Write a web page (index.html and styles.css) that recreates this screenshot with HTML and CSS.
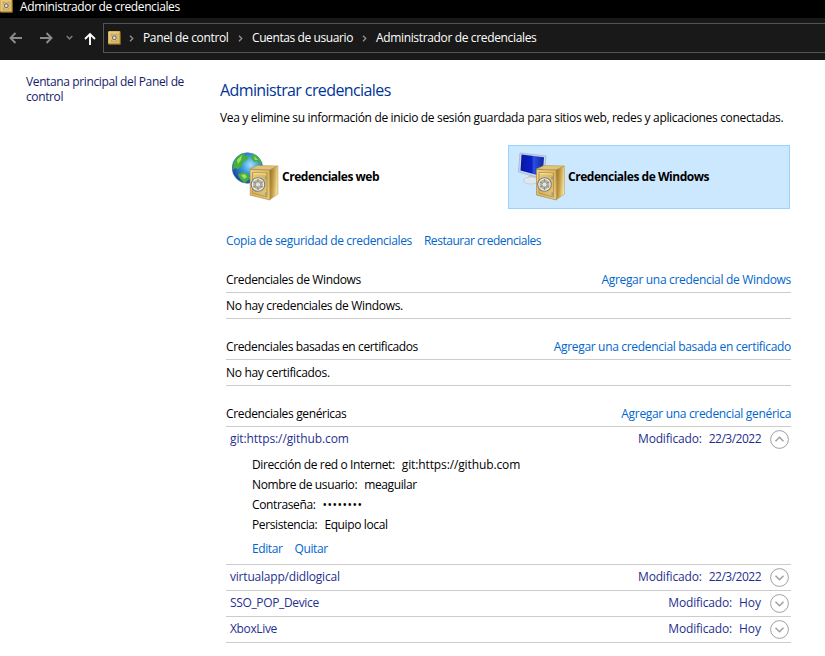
FILE: index.html
```html
<!DOCTYPE html>
<html lang="es">
<head>
<meta charset="utf-8">
<title>Administrador de credenciales</title>
<link rel="stylesheet" href="styles.css">
</head>
<body>
<svg class="defs" aria-hidden="true">
  <defs>
    <linearGradient id="gold" x1="0" y1="0" x2="1" y2="1"><stop offset="0" stop-color="#ecd58b"/><stop offset=".5" stop-color="#d8b764"/><stop offset="1" stop-color="#e5cc7e"/></linearGradient>
    <linearGradient id="goldSide" x1="0" y1="0" x2="1" y2="0.300"><stop offset="0" stop-color="#916c26"/><stop offset=".5" stop-color="#c39a42"/><stop offset="1" stop-color="#f0e09c"/></linearGradient>
    <radialGradient id="sea" cx=".6" cy=".4" r=".65"><stop offset="0" stop-color="#a0e4fa"/><stop offset=".45" stop-color="#3a94da"/><stop offset="1" stop-color="#1b3f98"/></radialGradient>
    <linearGradient id="screen" x1="0" y1="0" x2="1" y2="0"><stop offset="0" stop-color="#0717a4"/><stop offset=".48" stop-color="#0a20c8"/><stop offset=".56" stop-color="#2c50dc"/><stop offset="1" stop-color="#1023a8"/></linearGradient>
    <symbol id="safe" viewBox="0 0 30 38">
      <path d="M.5 5.500 8 2 28 2.500 20 6.500z" fill="#dfc578" stroke="#b8944a" stroke-width=".6"/>
      <path d="M20 6.500 28.500 2.500 28.500 30.500 20.500 36z" fill="url(#goldSide)" stroke="#b8944a" stroke-width=".5"/>
      <path d="M.5 6 20 6.500 20.500 36.500 .5 31.500z" fill="url(#gold)" stroke="#b08a3a" stroke-width=".7"/>
      <path d="M3 9 17.500 9.500 17.500 33.500 3 29.500z" fill="none" stroke="#a98537" stroke-width=".7"/>
      <path d="M4 10 16.500 10.500" stroke="#fff0ad" stroke-width=".7"/>
      <circle cx="8.500" cy="21" r="6.700" fill="#c2b48e" stroke="#808080" stroke-width="1.300"/>
      <circle cx="8.500" cy="21" r="5.600" fill="none" stroke="#ececec" stroke-width="1.200"/>
      <path d="M8.500 15.500v11M3.800 18.300l9.400 5.400M3.800 23.700l9.400-5.400" stroke="#8b8e94" stroke-width="1.300"/>
      <circle cx="8.500" cy="21" r="2.500" fill="#e2e3e7" stroke="#8a8a8a" stroke-width=".6"/>
      <path d="M16.300 13v3M16.300 29v3" stroke="#999" stroke-width="1.700"/>
    </symbol>
    <symbol id="vault" viewBox="0 0 13 14">
      <path d="M.5.5h11.500v12.500h-11.500z" fill="#dcb65b" stroke="#b58a34"/>
      <path d="M1 1h10.500M1 1v11" stroke="#f2da98"/>
      <path d="M2.500 2.500h7.500v8.500h-7.500z" fill="#c79c43" stroke="#e8ca7b" stroke-width=".7"/>
      <circle cx="6.300" cy="6.700" r="3" fill="#857145" stroke="#d9d2bc"/>
      <circle cx="6.300" cy="6.700" r="1.200" fill="#efeee5"/>
      <path d="M1 13.300h11.500V3" fill="none" stroke="#80601e" stroke-width=".8"/>
    </symbol>
    <symbol id="down" viewBox="0 0 19 19"><circle cx="9.500" cy="9.500" r="8.900" fill="none" stroke="#a0a0a0"/><path d="M5.500 7.700 9.500 11.700 13.500 7.700" fill="none" stroke="#a0a0a0" stroke-width="1.500"/></symbol>
    <symbol id="sep" viewBox="0 0 5 7"><path d="M1 .7 3.800 3.500 1 6.300" fill="none" stroke="#929292" stroke-width="1.300"/></symbol>
  </defs>
</svg>
<header class="titlebar"><svg class="app-icon"><use href="#vault"/></svg><span class="caption">Administrador de credenciales</span></header>
<nav class="toolbar">
  <svg class="nav-icons" viewBox="0 0 103 42" fill="none">
    <path d="M10.500 20H22M15.500 15 10.500 20l5 5" stroke="#8b8b8b" stroke-width="1.900"/>
    <path d="M40 20h11.500M46.500 15l5 5-5 5" stroke="#8b8b8b" stroke-width="1.900"/>
    <path d="M66.700 18l2.800 2.800 2.800-2.800" stroke="#777" stroke-width="1.600"/>
    <path d="M90 27V16M85 21l5-5 5 5" stroke="#fff" stroke-width="1.900"/>
  </svg>
  <div class="address">
    <svg class="vault"><use href="#vault"/></svg>
    <svg class="sep first"><use href="#sep"/></svg><span class="crumb c1">Panel de control</span>
    <svg class="sep"><use href="#sep"/></svg><span class="crumb c2">Cuentas de usuario</span>
    <svg class="sep"><use href="#sep"/></svg><span class="crumb c3">Administrador de credenciales</span>
  </div>
</nav>
<div class="page">
  <aside><a class="home">Ventana principal del Panel de<br>control</a></aside>
  <main>
    <h1>Administrar credenciales</h1>
    <p class="intro">Vea y elimine su información de inicio de sesión guardada para sitios web, redes y aplicaciones conectadas.</p>
    <div class="tiles">
      <div class="tile">
        <svg class="tile-icon" viewBox="0 0 50 50">
          <circle cx="15.500" cy="16" r="15.300" fill="url(#sea)" stroke="#3c73b0" stroke-width=".6"/>
          <path d="M1.500 11C4 5 9 1.500 13 1l-1 3 5 0-2 4-4 2-1 4-4 3-3-1-2 2zM20 2c5 1 8 5 10 9l-3 1-2-3-3 1-3-4zM6 22l5-2 5 2 2 4-5 5c-4-2-6-5-7-9z" fill="#45b13c"/>
          <path d="M5 8l5-5-1 5-3 4zM22 4l4 4-3 0zM9 23l4-1 2 3-3 2z" fill="#9fdf68"/>
          <use href="#safe" x="17.500" y="11.500" width="30" height="38"/>
        </svg>
        <b class="web">Credenciales web</b>
      </div>
      <div class="tile selected">
        <svg class="tile-icon" viewBox="0 0 50 50">
          <path d="M11 23h7l2 7H9z" fill="#bfc6d1"/><ellipse cx="13" cy="28.500" rx="7.500" ry="3.500" fill="#e2e5ea" stroke="#b8bfc9" stroke-width=".6"/>
          <path d="M2 1 28 4 26 27 .5 20z" fill="#cbd7ea" stroke="#a1b4cc" stroke-width=".8"/>
          <path d="M3.500 2.500 26 5.200 24.500 24.500 2.500 18.500z" fill="url(#screen)"/>
          <use href="#safe" x="18" y="11.500" width="30" height="38"/>
        </svg>
        <b class="win">Credenciales de Windows</b>
      </div>
    </div>
    <div class="content">
      <div class="actions"><a class="backup">Copia de seguridad de credenciales</a><a class="restore">Restaurar credenciales</a></div>
      <section>
        <div class="head"><span>Credenciales de Windows</span><a>Agregar una credencial de Windows</a></div>
        <div class="empty">No hay credenciales de Windows.</div>
      </section>
      <section>
        <div class="head"><span class="cert">Credenciales basadas en certificados</span><a>Agregar una credencial basada en certificado</a></div>
        <div class="empty">No hay certificados.</div>
      </section>
      <section>
        <div class="head"><span>Credenciales genéricas</span><a>Agregar una credencial genérica</a></div>
        <div class="entry open">
          <div class="row"><span class="name url">git:https://github.com</span><span class="label">Modificado:</span><span class="date">22/3/2022</span><svg class="toggle up"><use href="#down"/></svg></div>
          <div class="details">
            <div class="field"><span>Dirección de red o Internet:</span><span class="url">git:https://github.com</span></div>
            <div class="field"><span>Nombre de usuario:</span><span>meaguilar</span></div>
            <div class="field"><span>Contraseña:</span><span class="dots">••••••••</span></div>
            <div class="field"><span>Persistencia:</span><span>Equipo local</span></div>
            <div class="edit"><a>Editar</a><a>Quitar</a></div>
          </div>
        </div>
        <div class="entry"><div class="row"><span class="name path">virtualapp/didlogical</span><span class="label">Modificado:</span><span class="date">22/3/2022</span><svg class="toggle"><use href="#down"/></svg></div></div>
        <div class="entry"><div class="row"><span class="name">SSO_POP_Device</span><span class="label">Modificado:</span><span class="date today">Hoy</span><svg class="toggle"><use href="#down"/></svg></div></div>
        <div class="entry"><div class="row"><span class="name">XboxLive</span><span class="label">Modificado:</span><span class="date today">Hoy</span><svg class="toggle"><use href="#down"/></svg></div></div>
      </section>
    </div>
  </main>
</div>
</body>
</html>
```
FILE: styles.css
```css
* { box-sizing: border-box; }
body { margin: 0; width: 825px; height: 656px; overflow: hidden; background: #fff; color: #000; font: 12px/15px "Open Sans", "Noto Sans", sans-serif; letter-spacing: -0.35px; white-space: nowrap; }
svg { display: block; flex: none; }
.defs { position: absolute; width: 0; height: 0; }
a { color: #0066cc; letter-spacing: -0.32px; }
.titlebar { height: 18px; background: #000; color: #fff; display: flex; align-items: flex-start; }
.app-icon { width: 13px; height: 14px; margin-top: -1px; }
.caption { margin-left: 7px; line-height: 14px; letter-spacing: -0.37px; }
.toolbar { height: 42px; background: #191919; display: flex; }
.nav-icons { width: 103px; height: 42px; }
.address { flex: 1; height: 30px; margin-top: 5px; border: 1px solid #535353; border-right: 0; display: flex; align-items: center; color: #fff; padding-left: 4px; }
.vault { width: 13px; height: 14px; }
.sep { width: 5px; height: 7px; margin: 1px 9px 0 8px; }
.sep.first { margin-right: 9px; }
.crumb { padding-bottom: 2px; }
.c1 { width: 87px; }
.c2 { width: 102px; letter-spacing: -0.4px; }
.page { display: flex; }
aside { width: 220px; padding: 14px 0 0 26px; }
.home { color: #151c6b; letter-spacing: -0.38px; }
main { width: 571px; padding-top: 19px; }
h1 { margin: 0; font-size: 16px; line-height: 22px; font-weight: 400; letter-spacing: -0.6px; color: #003399; }
.intro { margin: 9px 0 0; line-height: 16px; letter-spacing: -0.33px; }
.tiles { display: flex; gap: 6px; margin: 19px 0 0 1px; }
.tile { width: 281px; height: 64px; display: flex; align-items: center; padding-left: 11px; }
.tile.selected { width: 282px; background: #cce8ff; border: 1px solid #99d1ff; padding-left: 9px; }
.tile-icon { width: 50px; height: 50px; }
.tile b { font-weight: 700; letter-spacing: -0.47px; padding-bottom: 2px; }
.content { margin-left: 6px; width: 565px; }
.actions { display: flex; gap: 12px; margin-top: 24px; height: 16px; line-height: 16px; }
.backup { letter-spacing: -0.35px; }
.restore { letter-spacing: -0.47px; }
section { margin-top: 16px; }
.actions + section { margin-top: 19px; }
.head { height: 25px; border-bottom: 1px solid #ccc; display: flex; justify-content: space-between; line-height: 24px; }
.cert { letter-spacing: -0.38px; }
.empty { height: 26px; border-bottom: 1px solid #ccc; line-height: 26px; letter-spacing: -0.32px; }
.entry { height: 26px; border-bottom: 1px solid #ccc; color: #1f2f8f; }
.entry.open { height: 138px; }
.row { display: flex; height: 25px; align-items: center; padding: 0 2px 0 4px; }
.row span { padding-bottom: 2px; }
.name { flex: 1; }
.url { letter-spacing: -0.1px; }
.path { letter-spacing: -0.2px; }
.label { letter-spacing: -0.18px; }
.date { margin-left: 7px; letter-spacing: -0.5px; }
.today { letter-spacing: 0; }
.toggle { width: 19px; height: 19px; margin-left: 9px; }
.up { transform: rotate(180deg); }
.details { margin: 3px 0 0 26px; color: #000; }
.field { display: flex; gap: 7px; height: 20px; line-height: 20px; letter-spacing: -0.38px; }
.field .url { letter-spacing: -0.12px; }
.dots { letter-spacing: 0.5px; }
.edit { display: flex; gap: 12px; margin-top: 4px; line-height: 20px; }
.edit a { letter-spacing: -0.4px; }
```
